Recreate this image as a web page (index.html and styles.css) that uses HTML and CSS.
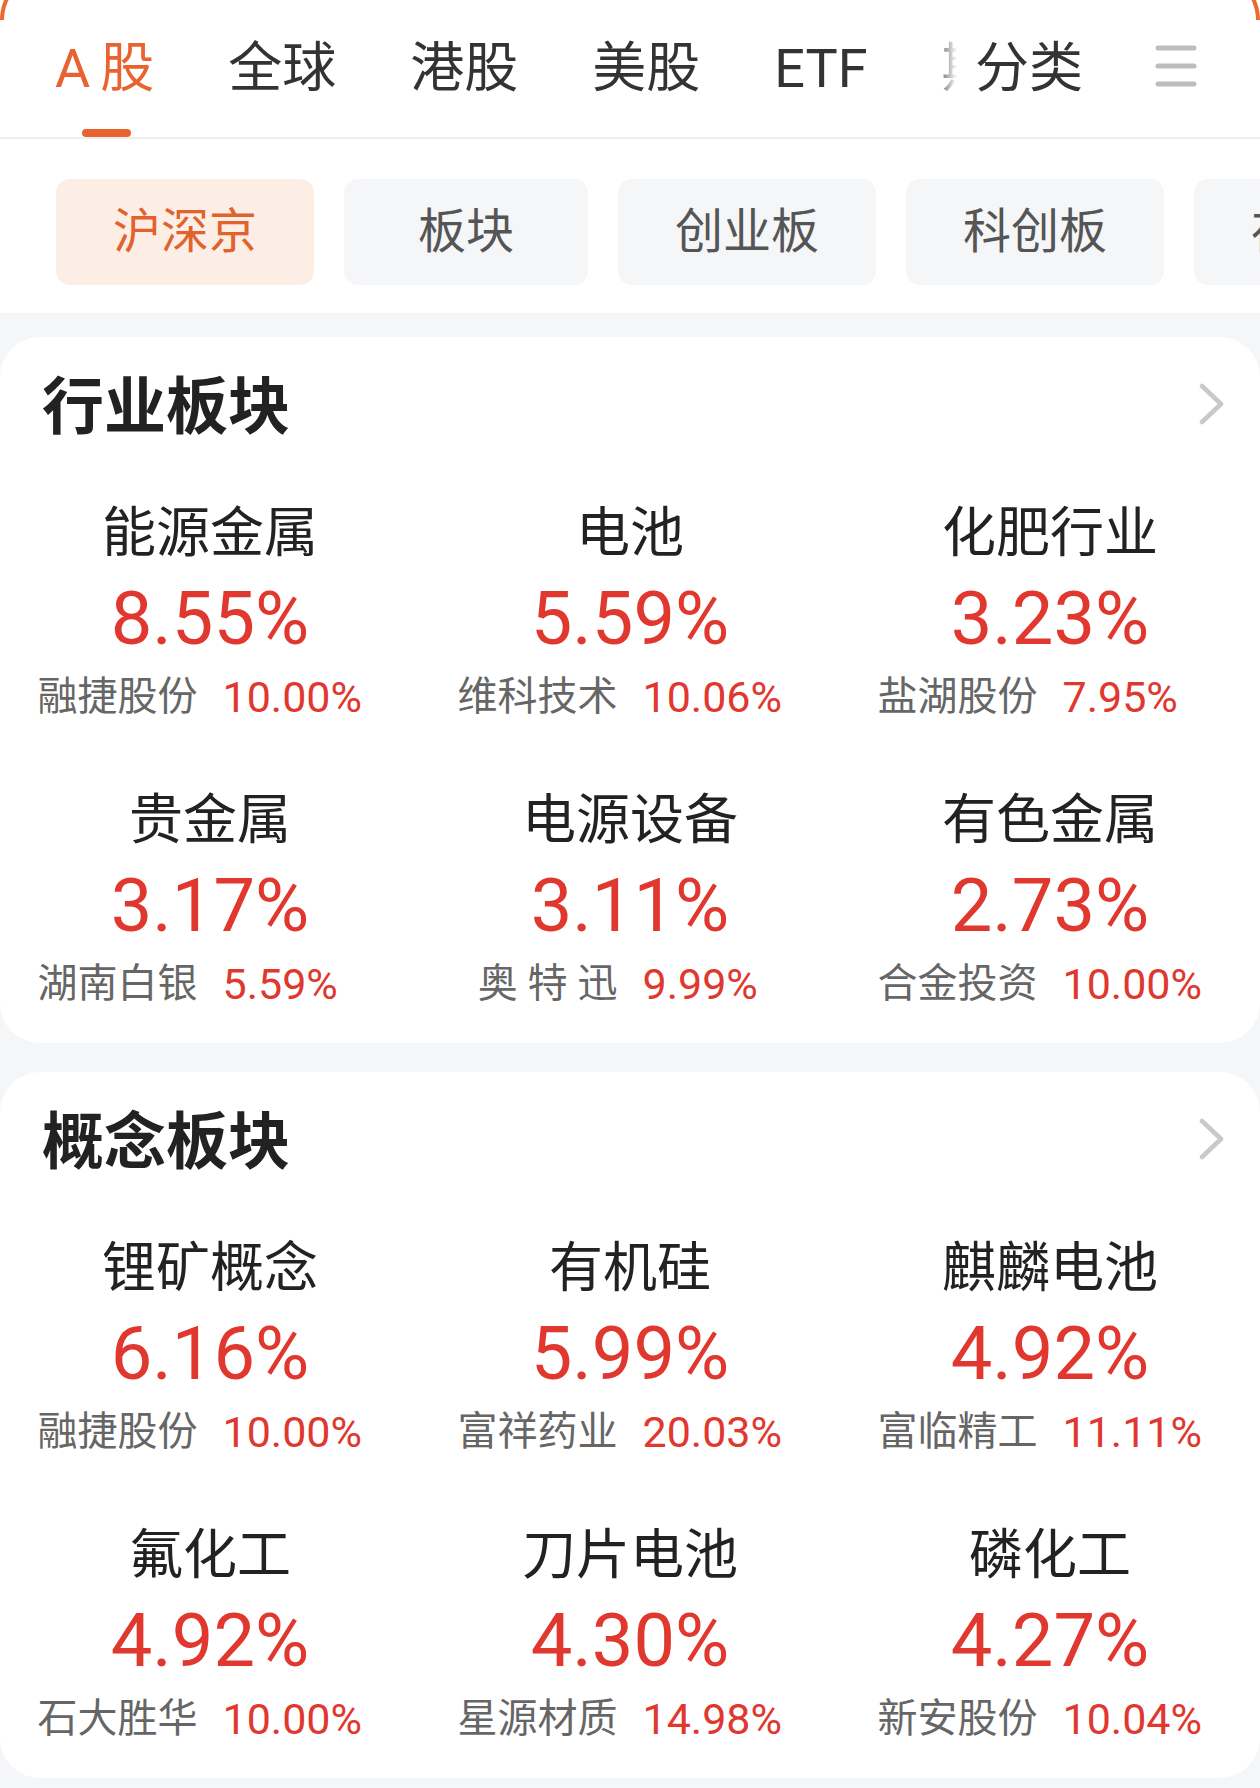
FILE: index.html
```html
<!DOCTYPE html>
<html lang="zh-CN">
<head>
    <meta charset="UTF-8">
    <meta name="viewport" content="width=device-width, initial-scale=1.0">
    <title>行情 - 板块</title>
    <link rel="stylesheet" href="styles.css">
</head>
<body>
    <div class="frame-edge"></div>

    <div class="top">
        <div class="tabs">
            <div class="tab-strip">
                <span class="tab active"><span class="latin">A</span>股</span>
                <span class="tab">全球</span>
                <span class="tab">港股</span>
                <span class="tab">美股</span>
                <span class="tab">ETF</span>
                <span class="tab">期货</span>
                <span class="tab">基金</span>
            </div>
            <div class="tab-more">
                <span class="tab">分类</span>
                <svg class="menu-icon" width="42" height="44" viewBox="0 0 42 44">
                    <path d="M3 3H39M3 21H39M3 39H39" stroke="#bdbdbd" stroke-width="5" stroke-linecap="round" fill="none"/>
                </svg>
            </div>
        </div>
        <div class="subtabs">
            <span class="pill active">沪深京</span>
            <span class="pill">板块</span>
            <span class="pill">创业板</span>
            <span class="pill">科创板</span>
            <span class="pill">存托凭证</span>
        </div>
    </div>

    <section class="card">
        <div class="card-head">
            <h2>行业板块</h2>
            <svg class="chevron" width="26" height="42" viewBox="0 0 26 42">
                <path d="M3 3L22 21L3 39" stroke="#c9c9c9" stroke-width="4.5" stroke-linecap="round" stroke-linejoin="round" fill="none"/>
            </svg>
        </div>
        <div class="grid">
            <div class="item">
                <div class="name">能源金属</div>
                <div class="pct">8.55%</div>
                <div class="lead"><span class="stock">融捷股份</span><span class="rate">10.00%</span></div>
            </div>
            <div class="item">
                <div class="name">电池</div>
                <div class="pct">5.59%</div>
                <div class="lead"><span class="stock">维科技术</span><span class="rate">10.06%</span></div>
            </div>
            <div class="item">
                <div class="name">化肥行业</div>
                <div class="pct">3.23%</div>
                <div class="lead"><span class="stock">盐湖股份</span><span class="rate">7.95%</span></div>
            </div>
            <div class="item">
                <div class="name">贵金属</div>
                <div class="pct">3.17%</div>
                <div class="lead"><span class="stock">湖南白银</span><span class="rate">5.59%</span></div>
            </div>
            <div class="item">
                <div class="name">电源设备</div>
                <div class="pct">3.11%</div>
                <div class="lead"><span class="stock">奥 特 迅</span><span class="rate">9.99%</span></div>
            </div>
            <div class="item">
                <div class="name">有色金属</div>
                <div class="pct">2.73%</div>
                <div class="lead"><span class="stock">合金投资</span><span class="rate">10.00%</span></div>
            </div>
        </div>
    </section>

    <section class="card">
        <div class="card-head">
            <h2>概念板块</h2>
            <svg class="chevron" width="26" height="42" viewBox="0 0 26 42">
                <path d="M3 3L22 21L3 39" stroke="#c9c9c9" stroke-width="4.5" stroke-linecap="round" stroke-linejoin="round" fill="none"/>
            </svg>
        </div>
        <div class="grid">
            <div class="item">
                <div class="name">锂矿概念</div>
                <div class="pct">6.16%</div>
                <div class="lead"><span class="stock">融捷股份</span><span class="rate">10.00%</span></div>
            </div>
            <div class="item">
                <div class="name">有机硅</div>
                <div class="pct">5.99%</div>
                <div class="lead"><span class="stock">富祥药业</span><span class="rate">20.03%</span></div>
            </div>
            <div class="item">
                <div class="name">麒麟电池</div>
                <div class="pct">4.92%</div>
                <div class="lead"><span class="stock">富临精工</span><span class="rate">11.11%</span></div>
            </div>
            <div class="item">
                <div class="name">氟化工</div>
                <div class="pct">4.92%</div>
                <div class="lead"><span class="stock">石大胜华</span><span class="rate">10.00%</span></div>
            </div>
            <div class="item">
                <div class="name">刀片电池</div>
                <div class="pct">4.30%</div>
                <div class="lead"><span class="stock">星源材质</span><span class="rate">14.98%</span></div>
            </div>
            <div class="item">
                <div class="name">磷化工</div>
                <div class="pct">4.27%</div>
                <div class="lead"><span class="stock">新安股份</span><span class="rate">10.04%</span></div>
            </div>
        </div>
    </section>
</body>
</html>
```

FILE: styles.css
```css
* {
    box-sizing: border-box;
}
body {
    margin: 0;
    position: relative;
    overflow: hidden;
    background: #f5f6f8;
    font-family: Roboto, "Noto Sans CJK SC", sans-serif;
    color: #222;
}
/* orange edge of the window frame peeking in at the top corners */
.frame-edge {
    position: absolute;
    top: -30px;
    left: 0;
    right: 0;
    height: 50px;
    border: 4px solid #ec6a2e;
    border-bottom: none;
    border-radius: 50px 50px 0 0;
    pointer-events: none;
    z-index: 5;
}
.top {
    background: #fff;
}
.tabs {
    position: relative;
    height: 139px;
    border-bottom: 2px solid #eeeeee;
    overflow: hidden;
}
.tab-strip {
    display: flex;
    gap: 74px;
    padding-left: 55px;
    white-space: nowrap;
}
.tab {
    position: relative;
    flex-shrink: 0;
    font-size: 54px;
    line-height: 137px;
    color: #333;
}
.tab .latin {
    margin-right: 10px;
}
.tab.active {
    color: #e8632f;
}
.tab.active::after {
    content: "";
    position: absolute;
    left: 50%;
    bottom: 0;
    width: 49px;
    height: 8px;
    margin-left: -23px;
    border-radius: 4px;
    background: #e8632f;
}
.tab-more {
    position: absolute;
    top: 0;
    right: 0;
    height: 137px;
    display: flex;
    align-items: center;
    padding: 0 63px 0 18px;
    background: #fff;
}
.tab-more::before {
    content: "";
    position: absolute;
    top: 0;
    bottom: 0;
    left: -24px;
    width: 24px;
    background: linear-gradient(to right, rgba(255, 255, 255, 0), #fff);
}
.tab-more .tab {
    margin-right: 72px;
}
.menu-icon {
    margin-bottom: 3px;
}
.subtabs {
    display: flex;
    gap: 30px;
    padding: 40px 0 28px 56px;
    overflow: hidden;
    white-space: nowrap;
}
.pill {
    flex-shrink: 0;
    min-width: 244px;
    height: 106px;
    padding: 0 57px;
    border-radius: 14px;
    background: #f5f6f8;
    font-size: 48px;
    line-height: 106px;
    text-align: center;
    color: #555;
}
.pill.active {
    background: #fdeee5;
    color: #e0622d;
}
.card {
    margin-top: 24px;
    padding: 31px 0 35px;
    background: #fff;
    border-radius: 40px;
}
.card + .card {
    margin-top: 29px;
}
.card-head {
    display: flex;
    justify-content: space-between;
    align-items: center;
    height: 80px;
    margin-bottom: 54px;
    padding: 0 35px 0 42px;
}
.card-head h2 {
    margin: 0;
    font-size: 62px;
    line-height: 80px;
    font-weight: bold;
    color: #222;
}
.chevron {
    margin-bottom: 9px;
}
.grid {
    display: grid;
    grid-template-columns: repeat(3, 1fr);
    row-gap: 68px;
}
.item {
    text-align: center;
}
.name {
    font-size: 54px;
    line-height: 64px;
    color: #222;
}
.pct {
    margin-top: 13px;
    font-size: 74px;
    line-height: 80px;
    color: #e0372f;
}
.lead {
    display: grid;
    grid-template-columns: 1fr 1fr;
    column-gap: 25px;
    margin-top: 14px;
    font-size: 40px;
    line-height: 48px;
    white-space: nowrap;
}
.stock {
    text-align: right;
    color: #666;
}
.rate {
    text-align: left;
    font-size: 43px;
    color: #e0372f;
}
```
